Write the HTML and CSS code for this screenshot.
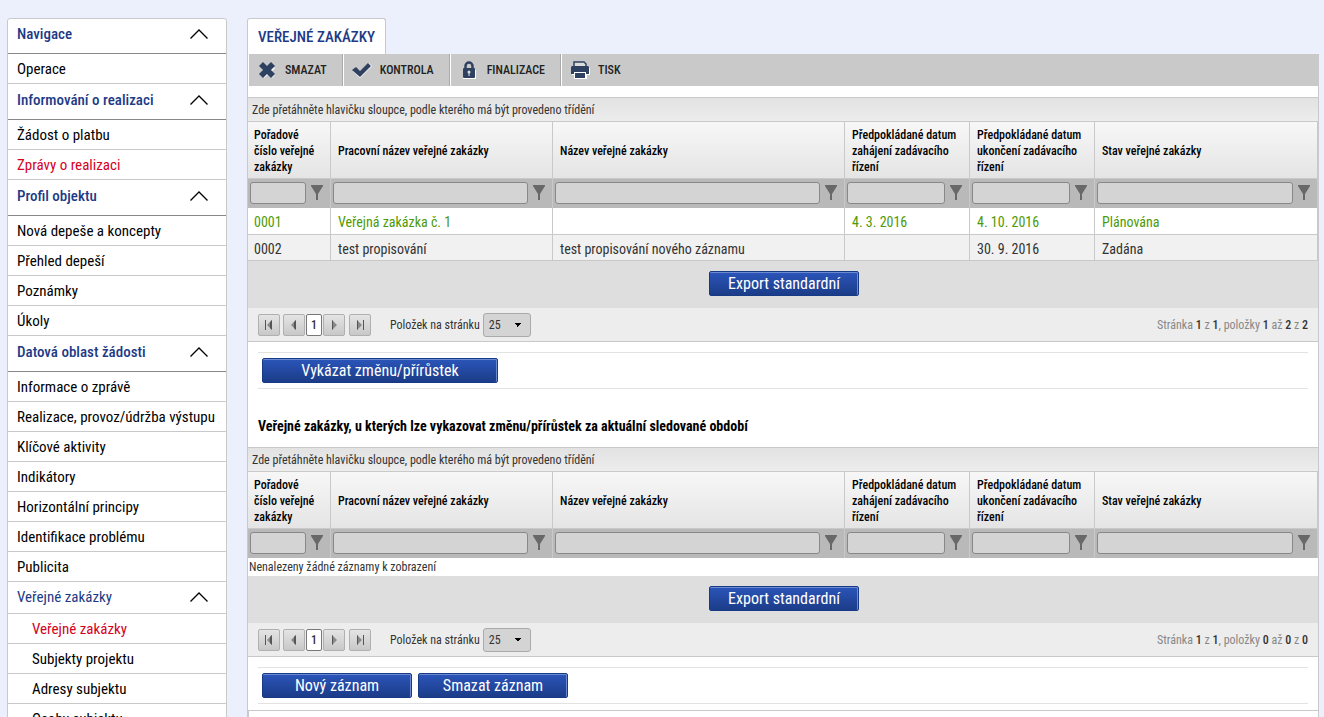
FILE: index.html
```html
<!DOCTYPE html>
<html lang="cs">
<head>
<meta charset="utf-8">
<title>Veřejné zakázky</title>
<link rel="stylesheet" href="styles.css">
</head>
<body>
<svg class="sprite" width="0" height="0" aria-hidden="true">
  <symbol id="chevron" viewBox="0 0 18 10"><path d="M0.5 9.5 9 1l8.500 8.500" fill="none" stroke="#000" stroke-width="1.300"/></symbol>
  <symbol id="funnel" viewBox="0 0 12 15"><path d="M0 0H12V1L7 9V15H5V9L0 1Z" fill="#686868"/></symbol>
  <symbol id="prev" viewBox="0 0 10 10"><path d="M7 0V10L2 5Z" fill="#888"/><path d="M7 0V10L5 8V2Z" fill="#555"/></symbol>
  <symbol id="next" viewBox="0 0 10 10"><path d="M3 0V10L8 5Z" fill="#888"/><path d="M3 0V10L4 9V1Z" fill="#555"/></symbol>
  <symbol id="first" viewBox="0 0 10 10"><path d="M8 0V10L3 5Z" fill="#888"/><path d="M8 0V10L6 8V2Z" fill="#555"/><path d="M1 0H2V10H1Z" fill="#555"/></symbol>
  <symbol id="last" viewBox="0 0 10 10"><path d="M2 0V10L7 5Z" fill="#888"/><path d="M2 0V10L3 9V1Z" fill="#555"/><path d="M8 0H9V10H8Z" fill="#555"/></symbol>
</svg>
<div class="layout">
  <nav class="nav">
    <button class="nav-head" type="button">Navigace<svg class="chevron"><use href="#chevron"/></svg></button>
    <a class="nav-item" href="#">Operace</a>
    <button class="nav-head" type="button">Informování o realizaci<svg class="chevron"><use href="#chevron"/></svg></button>
    <a class="nav-item" href="#">Žádost o platbu</a>
    <a class="nav-item active" href="#">Zprávy o realizaci</a>
    <button class="nav-head" type="button">Profil objektu<svg class="chevron"><use href="#chevron"/></svg></button>
    <a class="nav-item" href="#">Nová depeše a koncepty</a>
    <a class="nav-item" href="#">Přehled depeší</a>
    <a class="nav-item" href="#">Poznámky</a>
    <a class="nav-item" href="#">Úkoly</a>
    <button class="nav-head" type="button">Datová oblast žádosti<svg class="chevron"><use href="#chevron"/></svg></button>
    <a class="nav-item" href="#">Informace o zprávě</a>
    <a class="nav-item" href="#">Realizace, provoz/údržba výstupu</a>
    <a class="nav-item" href="#">Klíčové aktivity</a>
    <a class="nav-item" href="#">Indikátory</a>
    <a class="nav-item" href="#">Horizontální principy</a>
    <a class="nav-item" href="#">Identifikace problému</a>
    <a class="nav-item" href="#">Publicita</a>
    <button class="nav-head nav-sub-head" type="button">Veřejné zakázky<svg class="chevron"><use href="#chevron"/></svg></button>
    <a class="nav-item nav-sub active" href="#">Veřejné zakázky</a>
    <a class="nav-item nav-sub" href="#">Subjekty projektu</a>
    <a class="nav-item nav-sub" href="#">Adresy subjektu</a>
    <a class="nav-item nav-sub" href="#">Osoby subjektu</a>
  </nav>
  <main class="main">
    <h1 class="tab">VEŘEJNÉ ZAKÁZKY</h1>
    <div class="panel">
      <div class="toolbar">
        <button class="tool" type="button"><svg class="tool-icon" viewBox="0 0 20 18"><path d="M6 3 10 6 14 3 17 6 13.500 9.500 17 13 14 16 10 12.500 6 16 3 13 6.500 9.500 3 6Z" fill="#fff" transform="translate(1 1)"/><path d="M6 1 10 5 14 1 18 5 14 9 18 13 14 17 10 13 6 17 2 13 6 9 2 5Z" fill="#2f4161"/></svg>SMAZAT</button>
        <button class="tool" type="button"><svg class="tool-icon" viewBox="0 0 20 18"><path d="M1 10 4 7 8 10 17 2 20 5 8 17Z" fill="#fff"/><path d="M0 9 4 6 8 10 16 2 19 5 8 16Z" fill="#2f4161"/></svg>KONTROLA</button>
        <button class="tool" type="button"><svg class="tool-icon" viewBox="0 0 20 18"><path d="M4 9H17V18H4Z" fill="#fff"/><path d="M6.500 8V5a3.500 3.500 0 0 1 7 0V8" fill="none" stroke="#2f4161" stroke-width="2.500"/><rect x="4" y="7" width="12" height="10" rx="1" fill="#2f4161"/><circle cx="10" cy="11" r="1.500" fill="#ddd"/><path d="M9.500 11h1v4h-1Z" fill="#ddd"/></svg>FINALIZACE</button>
        <button class="tool" type="button"><svg class="tool-icon" viewBox="0 0 20 18"><path d="M2 7H20V14H17V18H4V14H2Z" fill="#fff"/><path d="M4 5V1H14L16 3V5" fill="#ddd" stroke="#2f4161" stroke-width="1.500"/><path d="M1 6 2 5H18L19 6V13H16V11H4V13H1Z" fill="#2f4161"/><path d="M5 12H15V17H5Z" fill="#2f4161"/></svg>TISK</button>
      </div>
      <section class="grid">
        <div class="group-bar">Zde přetáhněte hlavičku sloupce, podle kterého má být provedeno třídění</div>
        <table class="table">
          <colgroup><col class="c-num"><col class="c-work"><col class="c-name"><col class="c-date"><col class="c-date"><col></colgroup>
          <thead>
            <tr class="head"><th>Pořadové číslo veřejné zakázky</th><th>Pracovní název veřejné zakázky</th><th>Název veřejné zakázky</th><th>Předpokládané datum zahájení zadávacího řízení</th><th>Předpokládané datum ukončení zadávacího řízení</th><th>Stav veřejné zakázky</th></tr>
            <tr class="filter">
              <td><div class="filter-box"><input type="text" aria-label="Filtr: Pořadové číslo"><svg class="funnel"><use href="#funnel"/></svg></div></td>
              <td><div class="filter-box"><input type="text" aria-label="Filtr: Pracovní název"><svg class="funnel"><use href="#funnel"/></svg></div></td>
              <td><div class="filter-box"><input type="text" aria-label="Filtr: Název"><svg class="funnel"><use href="#funnel"/></svg></div></td>
              <td><div class="filter-box"><input type="text" aria-label="Filtr: Datum zahájení"><svg class="funnel"><use href="#funnel"/></svg></div></td>
              <td><div class="filter-box"><input type="text" aria-label="Filtr: Datum ukončení"><svg class="funnel"><use href="#funnel"/></svg></div></td>
              <td><div class="filter-box"><input type="text" aria-label="Filtr: Stav"><svg class="funnel"><use href="#funnel"/></svg></div></td>
            </tr>
          </thead>
          <tbody>
            <tr class="row selected"><td>0001</td><td>Veřejná zakázka č. 1</td><td></td><td>4. 3. 2016</td><td>4. 10. 2016</td><td>Plánována</td></tr>
            <tr class="row alt"><td>0002</td><td>test propisování</td><td>test propisování nového záznamu</td><td></td><td>30. 9. 2016</td><td>Zadána</td></tr>
          </tbody>
        </table>
        <div class="export"><button class="btn" type="button">Export standardní</button></div>
        <div class="pager">
          <button class="page-btn" type="button" aria-label="První"><svg class="arrow"><use href="#first"/></svg></button>
          <button class="page-btn" type="button" aria-label="Předchozí"><svg class="arrow"><use href="#prev"/></svg></button>
          <button class="page-num" type="button">1</button>
          <button class="page-btn page-next" type="button" aria-label="Další"><svg class="arrow"><use href="#next"/></svg></button>
          <button class="page-btn" type="button" aria-label="Poslední"><svg class="arrow"><use href="#last"/></svg></button>
          <label class="size-label" for="size1">Položek na stránku</label>
          <select class="size" id="size1"><option>25</option></select>
          <span class="status">Stránka <b>1</b> z <b>1</b>, položky <b>1</b> až <b>2</b> z <b>2</b></span>
        </div>
      </section>
      <div class="actions"><button class="btn btn-wide" type="button">Vykázat změnu/přírůstek</button></div>
      <h2 class="title">Veřejné zakázky, u kterých lze vykazovat změnu/přírůstek za aktuální sledované období</h2>
      <section class="grid">
        <div class="group-bar">Zde přetáhněte hlavičku sloupce, podle kterého má být provedeno třídění</div>
        <table class="table">
          <colgroup><col class="c-num"><col class="c-work"><col class="c-name"><col class="c-date"><col class="c-date"><col></colgroup>
          <thead>
            <tr class="head"><th>Pořadové číslo veřejné zakázky</th><th>Pracovní název veřejné zakázky</th><th>Název veřejné zakázky</th><th>Předpokládané datum zahájení zadávacího řízení</th><th>Předpokládané datum ukončení zadávacího řízení</th><th>Stav veřejné zakázky</th></tr>
            <tr class="filter">
              <td><div class="filter-box"><input type="text" aria-label="Filtr: Pořadové číslo"><svg class="funnel"><use href="#funnel"/></svg></div></td>
              <td><div class="filter-box"><input type="text" aria-label="Filtr: Pracovní název"><svg class="funnel"><use href="#funnel"/></svg></div></td>
              <td><div class="filter-box"><input type="text" aria-label="Filtr: Název"><svg class="funnel"><use href="#funnel"/></svg></div></td>
              <td><div class="filter-box"><input type="text" aria-label="Filtr: Datum zahájení"><svg class="funnel"><use href="#funnel"/></svg></div></td>
              <td><div class="filter-box"><input type="text" aria-label="Filtr: Datum ukončení"><svg class="funnel"><use href="#funnel"/></svg></div></td>
              <td><div class="filter-box"><input type="text" aria-label="Filtr: Stav"><svg class="funnel"><use href="#funnel"/></svg></div></td>
            </tr>
          </thead>
        </table>
        <p class="empty">Nenalezeny žádné záznamy k zobrazení</p>
        <div class="export"><button class="btn" type="button">Export standardní</button></div>
        <div class="pager">
          <button class="page-btn" type="button" aria-label="První"><svg class="arrow"><use href="#first"/></svg></button>
          <button class="page-btn" type="button" aria-label="Předchozí"><svg class="arrow"><use href="#prev"/></svg></button>
          <button class="page-num" type="button">1</button>
          <button class="page-btn page-next" type="button" aria-label="Další"><svg class="arrow"><use href="#next"/></svg></button>
          <button class="page-btn" type="button" aria-label="Poslední"><svg class="arrow"><use href="#last"/></svg></button>
          <label class="size-label" for="size2">Položek na stránku</label>
          <select class="size" id="size2"><option>25</option></select>
          <span class="status">Stránka <b>1</b> z <b>1</b>, položky <b>0</b> až <b>0</b> z <b>0</b></span>
        </div>
      </section>
      <div class="actions"><button class="btn" type="button">Nový záznam</button><button class="btn" type="button">Smazat záznam</button></div>
      <div class="detail"></div>
    </div>
  </main>
</div>
</body>
</html>
```
FILE: styles.css
```css
* { box-sizing: border-box; }
body {
  margin: 0;
  background: #ecf0fd;
  color: #333;
  font-family: "Roboto Condensed", "Liberation Sans Narrow", Roboto, sans-serif;
  font-size: 12px;
}
button, input, select { font: inherit; color: inherit; margin: 0; }
.sprite { position: absolute; }
.layout {
  display: grid;
  grid-template-columns: 220px minmax(0, 1fr);
  column-gap: 20px;
  padding: 18px 5px 0 7px;
}

.nav {
  display: flex;
  flex-direction: column;
  align-self: start;
  background: #fff;
  border: 1px solid #c9c9c9;
  border-radius: 3px 3px 0 0;
}
.nav-head {
  display: flex;
  align-items: center;
  justify-content: space-between;
  height: 36px;
  padding: 0 18px 4px 9px;
  border: 0;
  border-bottom: 1px solid #888;
  background: none;
  color: #1d3a86;
  font-size: 15px;
  font-weight: 500;
  white-space: nowrap;
}
.nav-head:first-child { height: 35px; }
.nav-head.nav-sub-head { height: 32px; border-color: #c9c9c9; font-weight: 400; padding-bottom: 1px; }
.nav-item {
  height: 30px;
  padding-left: 9px;
  border-bottom: 1px solid #c9c9c9;
  color: #000;
  font-size: 15px;
  line-height: 30px;
  text-decoration: none;
  white-space: nowrap;
}
.nav-sub { padding-left: 24px; }
.active { color: #d6001c; }
.chevron { width: 18px; height: 10px; }

.tab {
  width: max-content;
  margin: 0;
  padding: 1px 10px 0;
  border: 1px solid #c9c9c9;
  border-bottom: 0;
  border-radius: 3px 3px 0 0;
  background: #fff;
  color: #1d3a86;
  font-size: 15px;
  font-weight: 500;
  line-height: 34px;
}
.panel { border: 1px solid #c9c9c9; border-top: 0; background: #fff; }
.toolbar { display: flex; height: 32px; margin-bottom: 11px; background: #c9c9c9; }
.tool {
  display: flex;
  align-items: center;
  gap: 8px;
  padding: 0 15px 0 8px;
  border: 0;
  border-left: 1px solid #fff;
  border-right: 1px solid #aaa;
  background: none;
  color: #222;
  font-weight: 500;
}
.tool:last-child { border-right: 0; }
.tool-icon { width: 20px; height: 18px; }

.grid { border-top: 1px solid #c9c9c9; border-bottom: 1px solid #c9c9c9; }
.group-bar {
  height: 24px;
  padding-left: 4px;
  border-bottom: 1px solid #c9c9c9;
  background: linear-gradient(#e2e2e2, #ededed);
  line-height: 24px;
}
.table { width: 100%; table-layout: fixed; border-collapse: separate; border-spacing: 0; }
.c-num { width: 83px; }
.c-work { width: 222px; }
.c-name { width: 292px; }
.c-date { width: 125px; }
.table th, .table td { border-right: 1px solid #c9c9c9; }
.head { background: linear-gradient(#f7f7f7, #e4e4e4); }
.head th {
  height: 57px;
  padding: 2px 7px 0;
  border-bottom: 1px solid #c9c9c9;
  color: #000;
  font-weight: 500;
  line-height: 16px;
  text-align: left;
}
.head th:first-child, .row td:first-child { padding-left: 6px; }
.filter { background: #b9b9b9; }
.filter td { height: 29px; padding: 0 7px 2px 2px; }
.filter-box { display: flex; align-items: center; gap: 5px; }
.filter input {
  flex: 1;
  min-width: 0;
  height: 22px;
  border: 1px solid #888;
  border-radius: 3px;
  background: #d4d4d4;
}
.funnel { width: 12px; height: 15px; }
.row td { height: 27px; padding: 2px 7px 0; border-bottom: 1px solid #c9c9c9; font-size: 14px; }
.row.alt td { height: 26px; }
.selected { color: #4e9a06; }
.alt { background: #f1f1f1; }
.empty { margin: 0; padding-left: 1px; line-height: 18px; }

.export { display: flex; justify-content: center; height: 47px; padding: 10px 0 0 2px; background: #dedede; }
.btn {
  width: 150px;
  height: 25px;
  padding: 0;
  border: 1px solid #173a87;
  border-radius: 2px;
  background: linear-gradient(#2b55ba, #1b3c88);
  box-shadow: inset 0 1px 0 #6c8ad0, inset -1px 0 0 #6c8ad0;
  color: #fff;
  font-size: 16px;
  line-height: 22px;
}
.btn-wide { width: 236px; }
.pager { display: flex; align-items: center; height: 33px; padding: 0 10px; background: #ededed; }
.page-btn {
  display: flex;
  align-items: center;
  justify-content: center;
  width: 22px;
  height: 22px;
  margin-right: 3px;
  padding: 0;
  border: 1px solid #b0b0b0;
  border-radius: 2px;
  background: linear-gradient(#e4e4e4, #c8c8c8);
}
.page-next { margin-right: 4px; }
.page-num {
  width: 16px;
  height: 22px;
  margin: 0 1px 0 -2px;
  padding: 0;
  border: 1px solid #777;
  border-radius: 2px;
  background: #fff;
  font-weight: 500;
}
.arrow { width: 10px; height: 10px; }
.size-label { margin: 0 3px 0 16px; }
.size {
  width: 48px;
  height: 24px;
  padding: 0 5px;
  border: 1px solid #aaa;
  border-radius: 3px;
  appearance: none;
  background:
    linear-gradient(to bottom right, #000 50%, transparent 50%) 34px 9px / 4px 4px no-repeat,
    linear-gradient(to bottom left, #000 50%, transparent 50%) 30px 9px / 4px 4px no-repeat,
    #d4d4d4;
}
.status { margin-left: auto; color: #888; white-space: nowrap; }
.status b { color: #333; font-weight: 500; }

.actions {
  display: flex;
  gap: 6px;
  margin: 10px 10px 0;
  padding: 5px 4px;
  border: 1px solid #e2e2e2;
  border-width: 1px 0;
}
.title { margin: 0; padding: 28px 10px 12px; color: #000; font-size: 14px; line-height: 18px; }
.detail { height: 24px; margin-top: 6px; border: 1px solid #c9c9c9; border-right: 0; }
```
